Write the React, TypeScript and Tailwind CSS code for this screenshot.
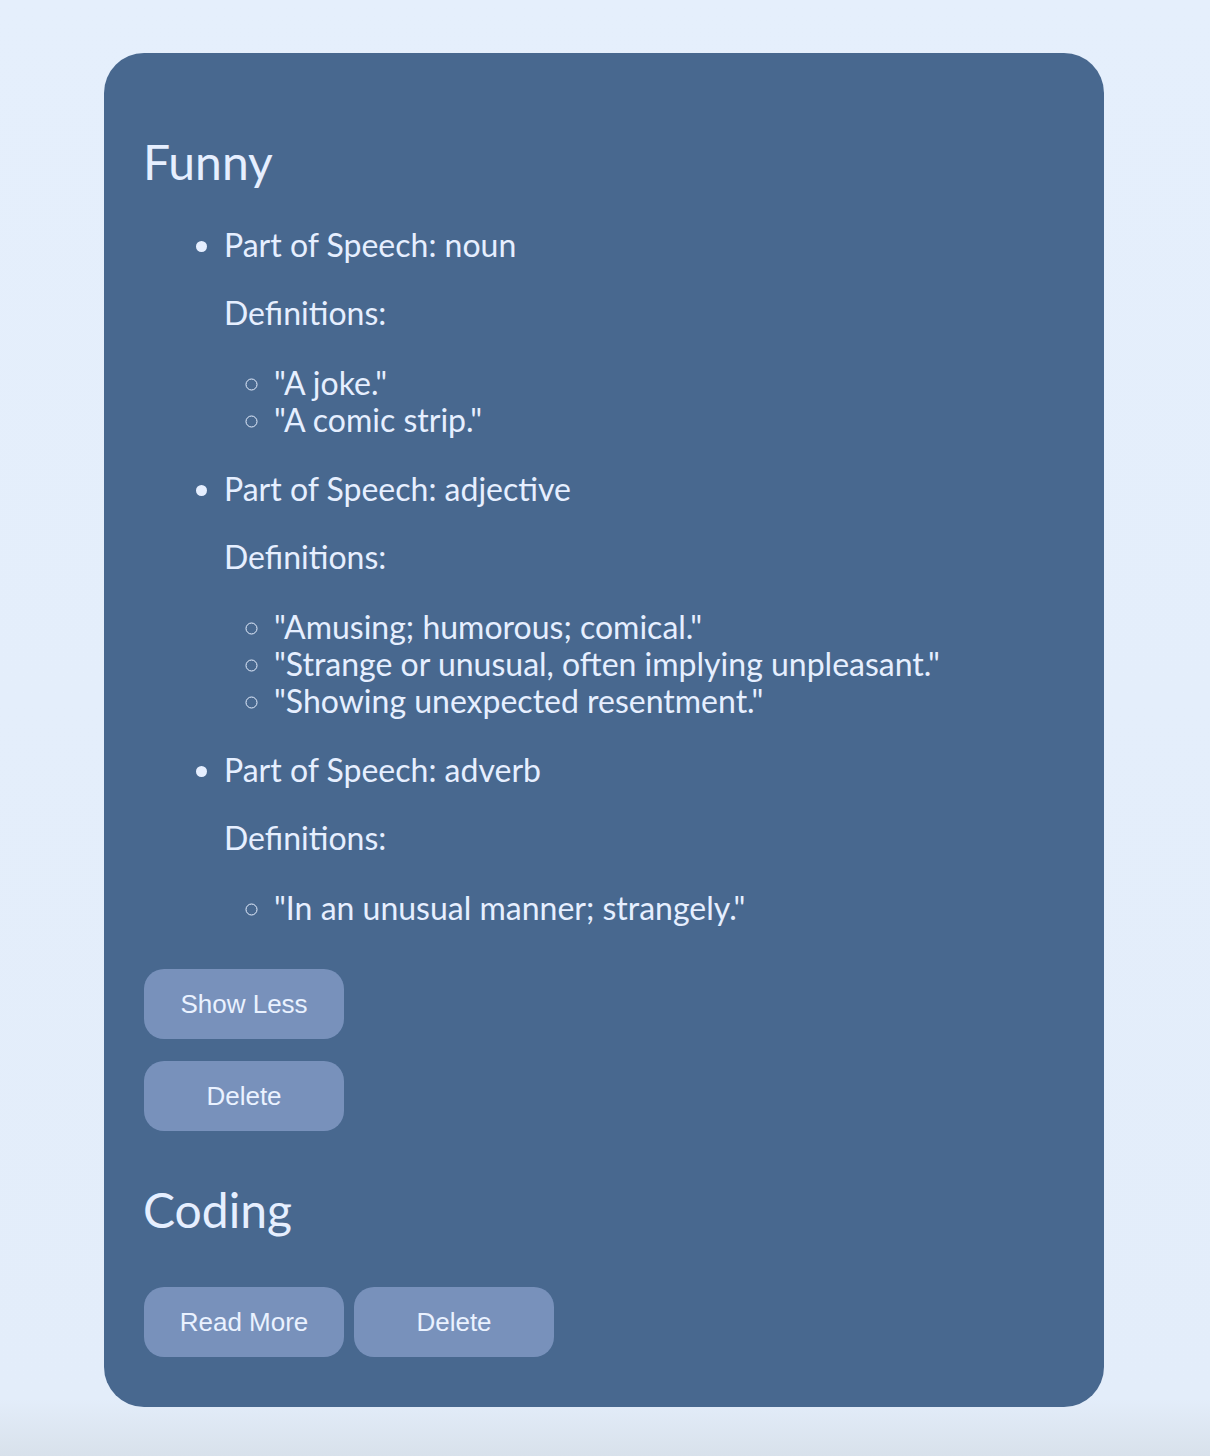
const words = [
  {
    word: "Funny",
    expanded: true,
    meanings: [
      { pos: "noun", defs: ["A joke.", "A comic strip."] },
      {
        pos: "adjective",
        defs: [
          "Amusing; humorous; comical.",
          "Strange or unusual, often implying unpleasant.",
          "Showing unexpected resentment.",
        ],
      },
      { pos: "adverb", defs: ["In an unusual manner; strangely."] },
    ],
  },
  { word: "Coding", expanded: false, meanings: [] },
];

const btn =
  "w-[200px] h-[70px] rounded-[20px] bg-[#7891bb] text-[#eaf2ff] text-[26px] font-['Liberation_Sans',Arial,sans-serif]";

export default function App() {
  return (
    <div className="min-h-screen bg-[linear-gradient(to_bottom,#e5effc_0%,#e3edfa_96%,#d8e1eb_100%)] pt-[53px] pb-[50px] font-['Lato',sans-serif]">
      <div className="ml-[104px] w-[1000px] rounded-[40px] bg-[#48688f] px-10 pt-[40px] pb-[50px] text-[#e6efff]">
        {words.map((w, i) => (
          <div key={i}>
            <h2
              className={`-ml-[1px] text-[48px] leading-[58px] ${
                w.expanded ? "mt-[40px] mb-[35px]" : "mt-[50px] mb-[48px]"
              }`}
            >
              {w.word}
            </h2>
            {w.expanded && (
              <ul className="list-disc pl-[80px] text-[32px] leading-[37px] mb-[43px]">
                {w.meanings.map((m, j) => (
                  <li key={j} className="mb-[32px]">
                    Part of Speech: {m.pos}
                    <p className="mt-[31px] mb-[33px]">Definitions:</p>
                    <ul className="list-[circle] pl-[50px]">
                      {m.defs.map((d, k) => (
                        <li key={k}>"{d}"</li>
                      ))}
                    </ul>
                  </li>
                ))}
              </ul>
            )}
            {w.expanded ? (
              <div className="flex flex-col gap-[22px]">
                <button className={btn}>Show Less</button>
                <button className={btn}>Delete</button>
              </div>
            ) : (
              <div className="flex gap-[10px]">
                <button className={btn}>Read More</button>
                <button className={btn}>Delete</button>
              </div>
            )}
          </div>
        ))}
      </div>
    </div>
  );
}
